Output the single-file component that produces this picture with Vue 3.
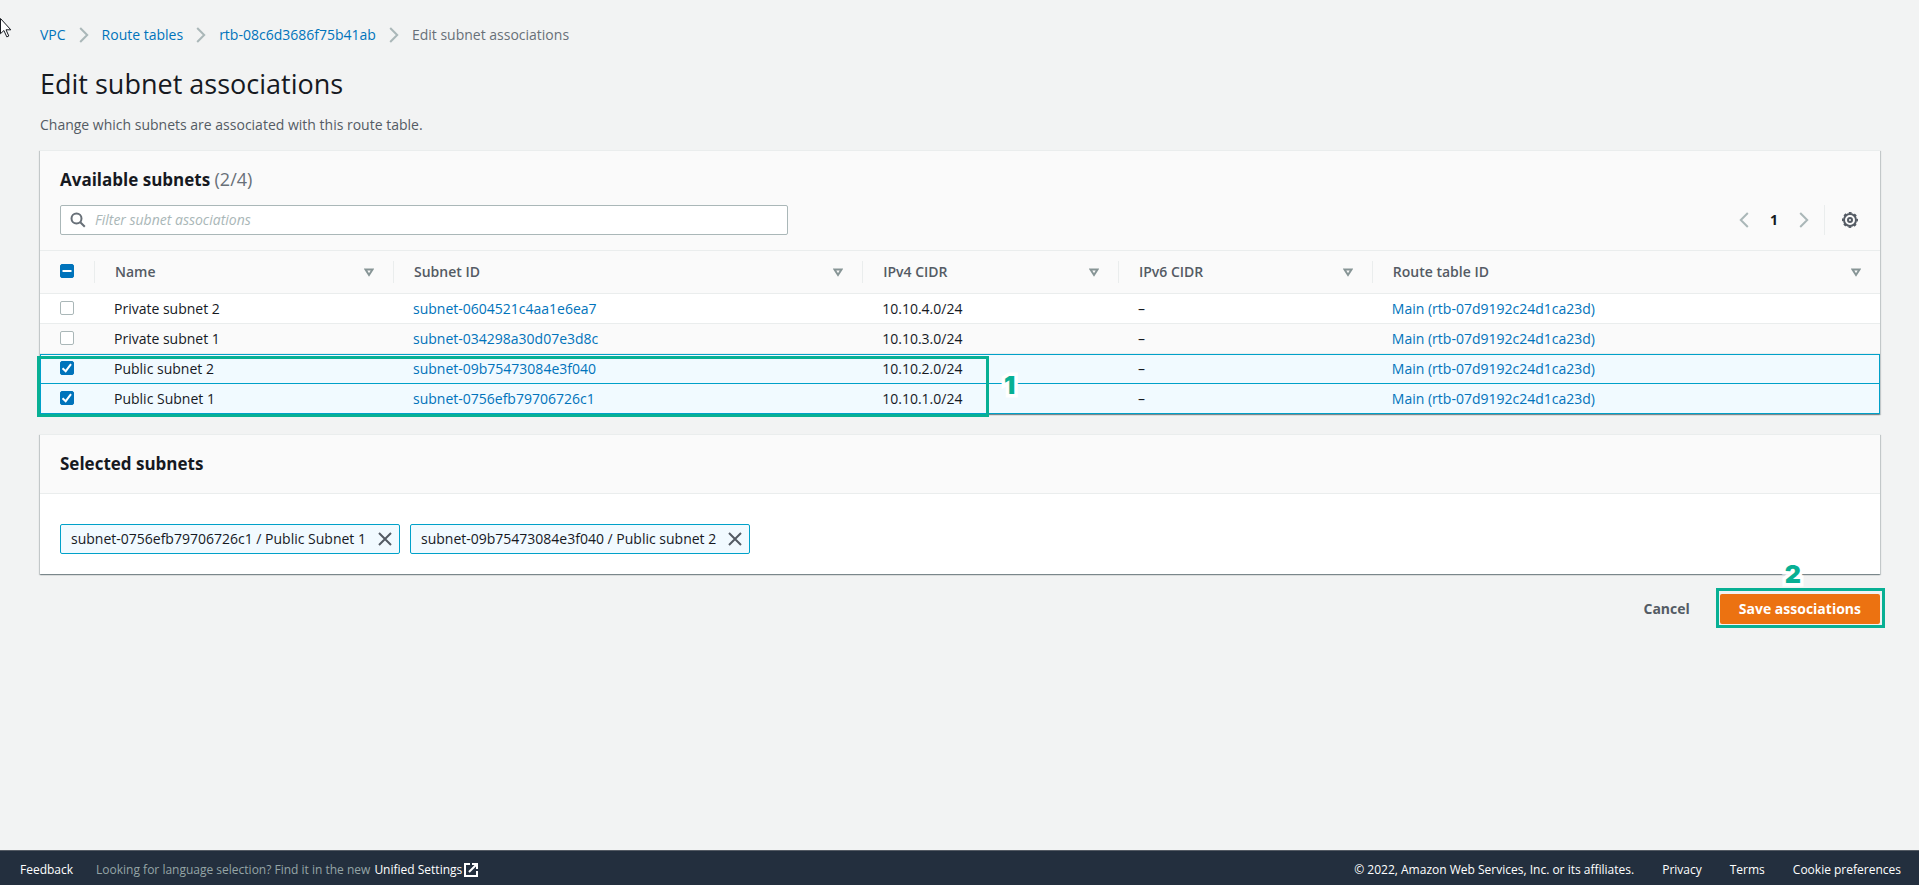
<template>
  <div class="page">
    <svg class="cursor" width="13" height="20" viewBox="0 0 13 20" aria-hidden="true">
      <path d="M.5.5v15.2l3.4-3.2 2.9 6.4 2-.9-2.8-6.2h4.8z" fill="#fff" stroke="#16191f" stroke-width="1" />
    </svg>

    <main class="main">
      <nav class="breadcrumbs" aria-label="Breadcrumbs">
        <template v-for="crumb in breadcrumbs" :key="crumb">
          <a href="#">{{ crumb }}</a>
          <svg class="breadcrumbs__icon" width="10" height="16" viewBox="0 0 10 16">
            <path d="M1.2 1l7 7-7 7" />
          </svg>
        </template>
        <span>Edit subnet associations</span>
      </nav>

      <h1>Edit subnet associations</h1>
      <p class="description">Change which subnets are associated with this route table.</p>

      <section class="panel">
        <div class="panel__header">
          <h2>
            Available subnets <span class="counter">({{ selected.length }}/{{ subnets.length }})</span>
          </h2>
          <div class="tools">
            <div class="filter">
              <label for="filter" aria-label="Filter subnet associations">
                <svg width="16" height="16" viewBox="0 0 16 16">
                  <circle cx="6.5" cy="6.5" r="5" />
                  <path d="M10.3 10.3l4.5 4.5" />
                </svg>
              </label>
              <input id="filter" v-model="filter" type="text" placeholder="Filter subnet associations" />
            </div>
            <div class="pagination">
              <button type="button" class="page__btn" aria-label="Previous page">
                <svg width="10" height="16" viewBox="0 0 10 16"><path d="M8.8 1l-7 7 7 7" /></svg>
              </button>
              <button type="button" class="page__btn page__btn--current">1</button>
              <button type="button" class="page__btn" aria-label="Next page">
                <svg width="10" height="16" viewBox="0 0 10 16"><path d="M1.2 1l7 7-7 7" /></svg>
              </button>
              <button type="button" class="settings__btn" aria-label="Preferences">
                <svg width="16" height="16" viewBox="0 0 16 16">
                  <circle cx="8" cy="8" r="6" />
                  <circle
                    cx="8"
                    cy="8"
                    r="7.2"
                    stroke-width="1.6"
                    stroke-dasharray="2.8 2.855"
                    stroke-dashoffset="1.4"
                  />
                  <circle cx="8" cy="8" r="2" />
                </svg>
              </button>
            </div>
          </div>
        </div>

        <div class="table__wrapper">
          <table>
            <colgroup>
              <col class="col-check" />
              <col class="col-name" />
              <col class="col-subnet" />
              <col class="col-ipv4" />
              <col class="col-ipv6" />
              <col />
            </colgroup>
            <thead>
              <tr>
                <th>
                  <input
                    type="checkbox"
                    aria-label="Select all subnets"
                    :checked="allSelected"
                    :indeterminate="someSelected"
                    @change="toggleAll"
                  />
                </th>
                <th v-for="column in columns" :key="column">
                  <div class="th__content">
                    <span>{{ column }}</span>
                    <svg width="10" height="9" viewBox="0 0 10 9"><path d="M1.5 1.5h7L5 7z" /></svg>
                  </div>
                </th>
              </tr>
            </thead>
            <tbody>
              <tr v-for="subnet in filteredSubnets" :key="subnet.id" :class="{ selected: isSelected(subnet) }">
                <td>
                  <input v-model="selected" type="checkbox" :value="subnet.id" :aria-label="subnet.name" />
                </td>
                <td>{{ subnet.name }}</td>
                <td><a href="#">{{ subnet.id }}</a></td>
                <td>{{ subnet.ipv4 }}</td>
                <td>–</td>
                <td><a href="#">Main (rtb-07d9192c24d1ca23d)</a></td>
              </tr>
            </tbody>
          </table>
          <div class="step step--rows"><span class="step__number">1</span></div>
        </div>
      </section>

      <section class="panel">
        <div class="panel__header panel__header--plain">
          <h2>Selected subnets</h2>
        </div>
        <div class="tokens">
          <div v-for="subnet in selectedSubnets" :key="subnet.id" class="token">
            <span>{{ subnet.id }} / {{ subnet.name }}</span>
            <button type="button" :aria-label="`Remove ${subnet.name}`" @click="remove(subnet)">
              <svg width="14" height="14" viewBox="0 0 14 14"><path d="M1 1l12 12M13 1L1 13" /></svg>
            </button>
          </div>
        </div>
      </section>

      <div class="actions">
        <button type="button" class="cancel__btn">Cancel</button>
        <div class="save">
          <button type="button" class="save__btn">Save associations</button>
          <div class="step step--save"><span class="step__number">2</span></div>
        </div>
      </div>
    </main>

    <footer class="footer">
      <a href="#" class="footer__feedback">Feedback</a>
      <span class="footer__hint">
        Looking for language selection? Find it in the new
        <a href="#" class="footer__settings">
          Unified Settings
          <svg width="14" height="14" viewBox="0 0 14 14">
            <path d="M6 1H1v12h12V8" />
            <path d="M8 1h5v5M13 1L5 9" />
          </svg>
        </a>
      </span>
      <span class="footer__copyright">© 2022, Amazon Web Services, Inc. or its affiliates.</span>
      <a href="#">Privacy</a>
      <a href="#">Terms</a>
      <a href="#">Cookie preferences</a>
    </footer>
  </div>
</template>

<script setup>
import { computed, ref } from 'vue';

const breadcrumbs = ['VPC', 'Route tables', 'rtb-08c6d3686f75b41ab'];
const columns = ['Name', 'Subnet ID', 'IPv4 CIDR', 'IPv6 CIDR', 'Route table ID'];

const subnets = [
  { name: 'Private subnet 2', id: 'subnet-0604521c4aa1e6ea7', ipv4: '10.10.4.0/24' },
  { name: 'Private subnet 1', id: 'subnet-034298a30d07e3d8c', ipv4: '10.10.3.0/24' },
  { name: 'Public subnet 2', id: 'subnet-09b75473084e3f040', ipv4: '10.10.2.0/24' },
  { name: 'Public Subnet 1', id: 'subnet-0756efb79706726c1', ipv4: '10.10.1.0/24' }
];

const filter = ref('');
const selected = ref(['subnet-0756efb79706726c1', 'subnet-09b75473084e3f040']);

const filteredSubnets = computed(() => {
  const query = filter.value.toLowerCase();
  return subnets.filter((s) => `${s.name} ${s.id} ${s.ipv4}`.toLowerCase().includes(query));
});

const selectedSubnets = computed(() => selected.value.map((id) => subnets.find((s) => s.id === id)));
const allSelected = computed(() => selected.value.length === subnets.length);
const someSelected = computed(() => selected.value.length > 0 && !allSelected.value);

const isSelected = (subnet) => selected.value.includes(subnet.id);

const toggleAll = (e) => {
  selected.value = e.target.checked ? subnets.map((s) => s.id) : [];
};

const remove = (subnet) => {
  selected.value = selected.value.filter((id) => id !== subnet.id);
};
</script>

<style>
body {
  margin: 0;
  background: #f2f3f3;
}
</style>

<style scoped>
.page {
  min-height: 100vh;
  display: flex;
  flex-direction: column;
  font-family: 'Open Sans', 'Noto Sans', sans-serif;
  font-size: 14px;
  line-height: 20px;
  color: #16191f;
}

.page * {
  box-sizing: border-box;
}

.cursor {
  position: absolute;
  top: 18px;
  left: 0;
}

.main {
  flex: 1;
  padding: 25px 39px 20px 40px;
}

a {
  color: #0073bb;
  text-decoration: none;
}

svg {
  display: block;
  flex-shrink: 0;
  fill: none;
  stroke: #545b64;
  stroke-width: 2;
}

button {
  padding: 0;
  border: none;
  background: none;
  font: inherit;
  color: inherit;
  cursor: pointer;
}

h1,
h2,
p {
  margin: 0;
}

h1 {
  margin-top: 21px;
  font-size: 27px;
  font-weight: 400;
  line-height: 36px;
}

h2 {
  font-size: 17px;
  font-weight: 700;
  line-height: 22px;
}

.breadcrumbs {
  display: flex;
  align-items: center;
  gap: 13px;
  color: #687078;
}

.breadcrumbs__icon {
  stroke: #aab7b8;
}

.description {
  margin-top: 13px;
  color: #545b64;
}

.panel {
  margin-top: 15px;
  background: #fff;
  border-top: 1px solid #eaeded;
  box-shadow:
    0 1px 1px rgba(0, 28, 36, 0.3),
    1px 1px 1px rgba(0, 28, 36, 0.15),
    -1px 1px 1px rgba(0, 28, 36, 0.15);
}

.panel + .panel {
  margin-top: 20px;
}

.panel__header {
  padding: 18px 20px 15px;
  background: #fafafa;
  border-bottom: 1px solid #eaeded;
}

.panel__header--plain {
  padding-block: 18px;
}

.counter {
  font-size: 18px;
  font-weight: 400;
  line-height: 18px;
  color: #687078;
}

.tools {
  margin-top: 14px;
  display: flex;
  justify-content: space-between;
}

.filter {
  display: flex;
  align-items: center;
  gap: 9px;
  width: 728px;
  height: 30px;
  padding-inline: 9px;
  background: #fff;
  border: 1px solid #aab7b8;
  border-radius: 2px;
}

.filter svg {
  stroke: #687078;
}

.filter input {
  flex: 1;
  padding: 0;
  border: none;
  outline: none;
  background: none;
  font: inherit;
  color: inherit;
}

.filter input::placeholder {
  font-style: italic;
  color: #aab7b8;
}

.pagination {
  display: flex;
  align-items: center;
}

.page__btn {
  width: 30px;
  height: 30px;
  display: grid;
  place-items: center;
}

.page__btn svg {
  stroke: #aab7b8;
}

.page__btn--current {
  font-weight: 700;
}

.settings__btn {
  height: 30px;
  margin-left: 5px;
  padding-inline: 17px 2px;
  border-left: 1px solid #eaeded;
}

.settings__btn svg {
  overflow: visible;
}

.table__wrapper {
  position: relative;
}

table {
  width: 100%;
  table-layout: fixed;
  border-collapse: separate;
  border-spacing: 0;
}

.col-check {
  width: 54px;
}

.col-name {
  width: 16.25%;
}

.col-subnet {
  width: 25.5%;
}

.col-ipv4 {
  width: 13.9%;
}

.col-ipv6 {
  width: 13.8%;
}

th {
  height: 43px;
  padding: 0;
  background: #fafafa;
  border-bottom: 1px solid #eaeded;
  font-weight: 600;
  text-align: left;
  color: #545b64;
}

th:first-child,
td:first-child {
  padding-left: 20px;
}

.th__content {
  display: flex;
  align-items: center;
  justify-content: space-between;
  height: 22px;
  padding-inline: 20px 19px;
  border-left: 1px solid #eaeded;
}

.th__content svg {
  stroke: #879596;
}

td {
  height: 30px;
  padding: 0 20px;
  border-bottom: 1px solid #eaeded;
}

tbody tr:nth-child(even) td {
  background: #fafafa;
}

tbody tr.selected td {
  background: #f1faff;
  border-bottom-color: #00a1c9;
}

tr.selected td:first-child {
  box-shadow: inset 1px 0 #00a1c9;
}

tr.selected td:last-child {
  box-shadow: inset -1px 0 #00a1c9;
}

/* top line of the first selected row */
tr:not(.selected) + tr.selected td {
  box-shadow: inset 0 1px #00a1c9;
}

tr:not(.selected) + tr.selected td:first-child {
  box-shadow: inset 1px 1px #00a1c9;
}

tr:not(.selected) + tr.selected td:last-child {
  box-shadow: inset -1px 1px #00a1c9;
}

input[type='checkbox'] {
  appearance: none;
  display: block;
  width: 14px;
  height: 14px;
  margin: 0 0 2px;
  background: #fff center / 14px no-repeat;
  border: 1px solid #aab7b8;
  border-radius: 2px;
}

input[type='checkbox']:checked,
input[type='checkbox']:indeterminate {
  background-color: #0073bb;
  border-color: #0073bb;
}

input[type='checkbox']:checked {
  background-image: url("data:image/svg+xml,%3Csvg xmlns='http://www.w3.org/2000/svg' viewBox='0 0 14 14'%3E%3Cpath d='M2.5 7.2l3.2 3L11 3.2' fill='none' stroke='%23fff' stroke-width='2'/%3E%3C/svg%3E");
}

input[type='checkbox']:indeterminate {
  background-image: url("data:image/svg+xml,%3Csvg xmlns='http://www.w3.org/2000/svg' viewBox='0 0 14 14'%3E%3Cpath d='M2.5 7h9' fill='none' stroke='%23fff' stroke-width='2'/%3E%3C/svg%3E");
}

/* numbered callouts */
.step {
  position: absolute;
  border: 3px solid #08b094;
  pointer-events: none;
}

.step--rows {
  left: -3px;
  bottom: -3px;
  width: 952px;
  height: 61px;
}

.step--save {
  inset: -6px -5px -4px -4px;
}

.step__number {
  position: absolute;
  font-family: Inter, sans-serif;
  font-size: 25px;
  font-weight: 900;
  line-height: 24px;
  color: #08b094;
  -webkit-text-stroke: 7px #fff;
  paint-order: stroke fill;
}

.step--rows .step__number {
  left: calc(100% + 18px);
  top: 14px;
}

.step--save .step__number {
  left: 66px;
  top: -29px;
}

.tokens {
  display: flex;
  flex-wrap: wrap;
  gap: 10px;
  padding: 30px 20px 20px;
}

.token {
  display: flex;
  align-items: center;
  gap: 12px;
  height: 30px;
  padding-inline: 10px 7px;
  background: #f1faff;
  border: 1px solid #00a1c9;
  border-radius: 2px;
}

.actions {
  display: flex;
  justify-content: flex-end;
  align-items: center;
  gap: 30px;
  margin-top: 20px;
  font-weight: 700;
}

.cancel__btn {
  color: #545b64;
}

.save {
  position: relative;
}

.save__btn {
  height: 30px;
  padding-inline: 19px;
  background: #ec7211;
  border-radius: 2px;
  color: #fff;
}

.footer {
  display: flex;
  align-items: center;
  gap: 28px;
  height: 35px;
  padding: 4px 18px 0 20px;
  background: #232f3e;
  border-top: 1px solid #545b64;
  font-size: 12px;
  color: #fff;
}

.footer a {
  color: #fff;
}

.footer__hint {
  display: flex;
  gap: 4px;
  margin-left: -5px;
  color: #95a5a6;
}

.footer__settings {
  display: flex;
  align-items: center;
  gap: 2px;
}

.footer__settings svg {
  stroke: #fff;
}

.footer__feedback,
.footer__settings {
  font-weight: 500;
}

.footer__copyright {
  margin-left: auto;
}
</style>
